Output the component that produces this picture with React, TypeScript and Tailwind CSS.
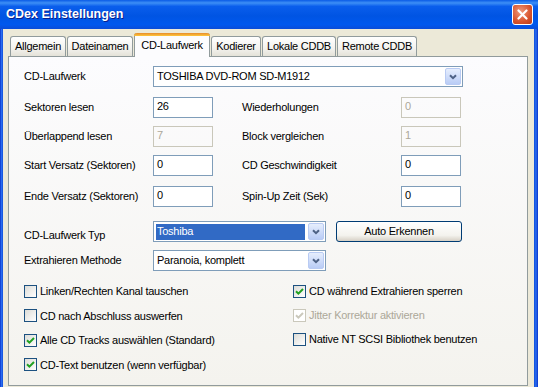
import React from 'react';

function ArrowButton() {
  return (
    <div className="flex h-[17px] w-[16px] items-center justify-center rounded-[2px] border border-[#B9CBF3] bg-[linear-gradient(to_bottom,#E6EEFD,#B9CCF6)]">
      <svg width="8" height="6" viewBox="0 0 8 6">
        <path d="M1 1.2 L4 4.2 L7 1.2" fill="none" stroke="#4D6185" strokeWidth="2" />
      </svg>
    </div>
  );
}

function Edit({ value, disabled }: { value: string; disabled?: boolean }) {
  return (
    <div
      className={
        disabled
          ? 'h-[21px] w-[60px] border border-[#C9C7BA] pl-[3px] leading-[17px] text-[#ACA899]'
          : 'h-[21px] w-[60px] border border-[#7F9DB9] bg-white pl-[3px] leading-[17px] text-black'
      }
    >
      {value}
    </div>
  );
}

function CheckMark({ color }: { color: string }) {
  return (
    <svg width="9" height="9" viewBox="0 0 9 9">
      <path d="M1 4.2 L3.4 6.6 L8 2" fill="none" stroke={color} strokeWidth="2" />
    </svg>
  );
}

function Check({ label, checked, disabled, rowClass }: { label: string; checked?: boolean; disabled?: boolean; rowClass: string }) {
  return (
    <div className={`flex items-center ${rowClass}`}>
      <div
        className={
          disabled
            ? 'flex h-[13px] w-[13px] items-center justify-center border border-[#CAC8BB] bg-white'
            : 'flex h-[13px] w-[13px] items-center justify-center border border-[#1C5180] bg-[linear-gradient(135deg,#DCDCD7,#FFFFFF)]'
        }
      >
        {checked && <CheckMark color={disabled ? '#CAC8BB' : '#21A121'} />}
      </div>
      <span className={disabled ? 'ml-[3px] text-[#ACA899]' : 'ml-[3px]'}>{label}</span>
    </div>
  );
}

const tabs = [
  { label: 'Allgemein', w: 'w-[56px]' },
  { label: 'Dateinamen', w: 'w-[66px]' },
  { label: 'CD-Laufwerk', w: 'w-[76px]', active: true },
  { label: 'Kodierer', w: 'w-[50px]' },
  { label: 'Lokale CDDB', w: 'w-[74px]' },
  { label: 'Remote CDDB', w: 'w-[80px]' },
];

export default function App() {
  return (
    <div className="flex h-[387px] w-[538px] flex-col overflow-hidden bg-[#ECE9D8] font-['Liberation_Sans',Arial,sans-serif] text-[11px] tracking-[-0.25px] text-black">
      {/* title bar */}
      <div className="flex h-[29px] shrink-0 items-center justify-between bg-[linear-gradient(to_bottom,#0A5BE6_0%,#3D8FF6_10%,#0A5EEC_22%,#0054E3_55%,#0058EE_85%,#0A4CD8_100%)] pl-[6px] pr-[5px]">
        <span className="text-[12.5px] font-bold tracking-normal text-white [text-shadow:1px_1px_0_#0A1E8C]">CDex Einstellungen</span>
        <div className="flex h-[21px] w-[21px] items-center justify-center rounded-[3px] border border-white bg-[radial-gradient(circle_at_40%_35%,#F09A7C,#D8532C_60%,#B93A18)]">
          <svg width="11" height="11" viewBox="0 0 11 11">
            <path d="M1.5 1.5 L9.5 9.5 M9.5 1.5 L1.5 9.5" stroke="white" strokeWidth="2.2" strokeLinecap="round" />
          </svg>
        </div>
      </div>

      {/* body */}
      <div className="flex flex-1">
        <div className="w-[3px] bg-[linear-gradient(to_right,#0832C8,#2A6CF0,#0F4FDA)]" />
        <div className="flex flex-1 flex-col">
          {/* tabs */}
          <div className="ml-[7px] mt-[4px] flex h-[23px] items-end gap-[1px]">
            {tabs.map((t) =>
              t.active ? (
                <div
                  key={t.label}
                  className={`relative z-10 -mb-[1px] flex h-[24px] ${t.w} flex-col rounded-t-[3px] border-x border-[#919B9C] bg-[#FCFCFE]`}
                >
                  <div className="-mx-[1px] h-[3px] rounded-t-[3px] bg-[linear-gradient(to_bottom,#E68B2C,#FFC73C)]" />
                  <div className="flex flex-1 items-center justify-center pb-[2px]">{t.label}</div>
                </div>
              ) : (
                <div
                  key={t.label}
                  className={`flex h-[20px] ${t.w} items-center justify-center rounded-t-[3px] border border-b-0 border-[#919B9C] bg-[linear-gradient(to_bottom,#FFFFFF,#F3F2EE_60%,#E4E2D8)]`}
                >
                  {t.label}
                </div>
              )
            )}
          </div>

          {/* panel */}
          <div className="ml-[5px] flex h-[330px] w-[520px] flex-col border border-[#919B9C] bg-[linear-gradient(to_bottom,#FCFCFE,#F4F3EE)] pl-[15px]">
            <div className="mt-[9px] flex h-[21px] items-center">
              <div className="w-[129px]">CD-Laufwerk</div>
              <div className="flex h-[21px] w-[310px] items-center justify-between border border-[#7F9DB9] bg-white pl-[3px] pr-[1px]">
                <span>TOSHIBA DVD-ROM SD-M1912</span>
                <ArrowButton />
              </div>
            </div>

            <div className="mt-[10px] flex h-[21px] items-center">
              <div className="w-[129px]">Sektoren lesen</div>
              <Edit value="26" />
              <div className="ml-[29px] w-[159px]">Wiederholungen</div>
              <Edit value="0" disabled />
            </div>

            <div className="mt-[8px] flex h-[21px] items-center">
              <div className="w-[129px]">Überlappend lesen</div>
              <Edit value="7" disabled />
              <div className="ml-[29px] w-[159px]">Block vergleichen</div>
              <Edit value="1" disabled />
            </div>

            <div className="mt-[8px] flex h-[21px] items-center">
              <div className="w-[129px]">Start Versatz (Sektoren)</div>
              <Edit value="0" />
              <div className="ml-[29px] w-[159px]">CD Geschwindigkeit</div>
              <Edit value="0" />
            </div>

            <div className="mt-[10px] flex h-[21px] items-center">
              <div className="w-[129px]">Ende Versatz (Sektoren)</div>
              <Edit value="0" />
              <div className="ml-[29px] w-[159px]">Spin-Up Zeit (Sek)</div>
              <Edit value="0" />
            </div>

            <div className="mt-[14px] flex h-[21px] items-center">
              <div className="w-[129px] pt-[8px]">CD-Laufwerk Typ</div>
              <div className="flex h-[21px] w-[173px] items-center border border-[#7F9DB9] bg-white pl-[2px] pr-[1px]">
                <div className="mr-[3px] flex h-[16px] flex-1 items-center bg-[#316AC5] pl-[1px] text-white">Toshiba</div>
                <ArrowButton />
              </div>
              <div className="ml-[10px] flex h-[21px] w-[126px] items-center justify-center rounded-[3px] border border-[#003C74] bg-[linear-gradient(to_bottom,#FFFFFF,#F4F3EE_70%,#D6D0C5)]">
                Auto Erkennen
              </div>
            </div>

            <div className="mt-[8px] flex h-[21px] items-center">
              <div className="w-[129px]">Extrahieren Methode</div>
              <div className="flex h-[21px] w-[173px] items-center justify-between border border-[#7F9DB9] bg-white pl-[3px] pr-[1px]">
                <span>Paranoia, komplett</span>
                <ArrowButton />
              </div>
            </div>

            <div className="mt-[8px] flex">
              <div className="flex w-[269px] flex-col">
                <Check rowClass="h-[24.5px]" label="Linken/Rechten Kanal tauschen" />
                <Check rowClass="h-[24.5px]" label="CD nach Abschluss auswerfen" />
                <Check rowClass="h-[24.5px]" label="Alle CD Tracks auswählen (Standard)" checked />
                <Check rowClass="h-[24.5px]" label="CD-Text benutzen (wenn verfügbar)" checked />
              </div>
              <div className="flex flex-col">
                <Check rowClass="h-[24px]" label="CD während Extrahieren sperren" checked />
                <Check rowClass="h-[24px]" label="Jitter Korrektur aktivieren" checked disabled />
                <Check rowClass="h-[24px]" label="Native NT SCSI Bibliothek benutzen" />
              </div>
            </div>
          </div>
        </div>
        <div className="w-[4px] bg-[linear-gradient(to_right,#0F4FDA,#2A6CF0,#0832C8)]" />
      </div>
    </div>
  );
}
